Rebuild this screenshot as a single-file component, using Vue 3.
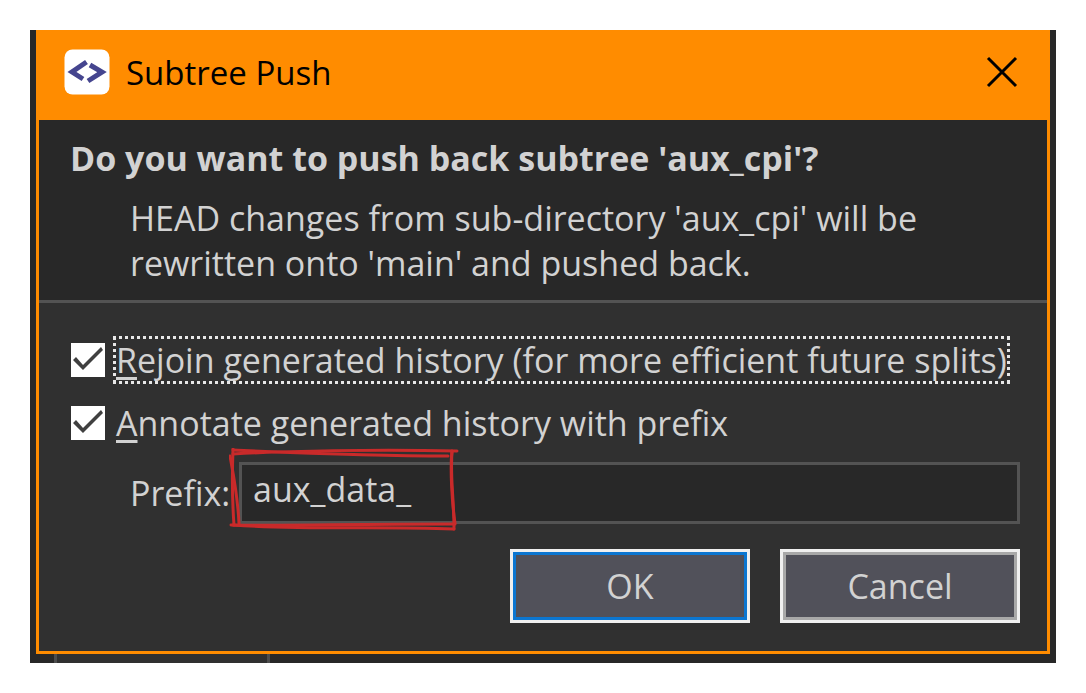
<script setup>
import { ref } from 'vue'

const rejoin = ref(true)
const annotate = ref(true)
const prefix = ref('aux_data_')
</script>

<template>
  <main class="page">
    <div class="backdrop">
      <section class="dialog" role="dialog" aria-labelledby="dialog-title">
        <header class="titlebar">
          <svg class="app-icon" viewBox="0 0 46 46" aria-hidden="true">
            <rect x="0.5" y="0.5" width="45" height="45" rx="8" fill="#fff" />
            <path d="M22.500 13 8 23l11 7M26 16l12 7-14 9" fill="none" stroke="#45458f" stroke-width="5" />
          </svg>
          <h1 id="dialog-title" class="title">Subtree Push</h1>
          <button class="close" type="button" aria-label="Close">
            <svg viewBox="0 0 32 32" aria-hidden="true">
              <path d="M2 2l28 28M30 2 2 30" fill="none" stroke="#000" stroke-width="3" />
            </svg>
          </button>
        </header>

        <div class="intro">
          <h2 class="question">Do you want to push back subtree 'aux_cpi'?</h2>
          <p class="detail">
            HEAD changes from sub-directory 'aux_cpi' will be<br />
            rewritten onto 'main' and pushed back.
          </p>
        </div>

        <form class="body" @submit.prevent>
          <div class="option">
            <input id="rejoin" v-model="rejoin" type="checkbox" class="check" />
            <label for="rejoin" class="caption focused"><u>R</u>ejoin generated history (for more efficient future splits)</label>
          </div>
          <div class="option">
            <input id="annotate" v-model="annotate" type="checkbox" class="check" />
            <label for="annotate" class="caption"><u>A</u>nnotate generated history with prefix</label>
          </div>
          <div class="field">
            <label for="prefix" class="field-label">Prefix:</label>
            <div class="field-box">
              <input id="prefix" v-model="prefix" type="text" class="text-input" spellcheck="false" />
              <svg class="marker" viewBox="0 0 230 84" aria-hidden="true">
                <g fill="none" stroke="#c92a2a" stroke-width="3" stroke-linecap="round">
                  <path d="M4 6C54 3 148 1 228 3" />
                  <path d="M4 2C50 4 134 8 219 8" />
                  <path d="M223 3C221 20 223 55 226 75" />
                  <path d="M223 4C221 30 225 50 225 81" />
                  <path d="M2 77C60 78 114 76 226 76" />
                  <path d="M4 77C78 82 148 78 225 81" />
                  <path d="M4 1C3 27 3 50 5 77" />
                  <path d="M1 8C5 30 9 50 10 76" />
                </g>
              </svg>
            </div>
          </div>
          <div class="actions">
            <button class="btn primary" type="submit">OK</button>
            <button class="btn" type="button">Cancel</button>
          </div>
        </form>
      </section>
      <div class="behind"><div class="behind-tab"></div></div>
    </div>
  </main>
</template>

<style>
body {
  background: #fff;
}
</style>

<style scoped>
* {
  box-sizing: border-box;
}
.page {
  padding: 30px;
  font-family: "Open Sans", "Noto Sans", sans-serif;
  font-size: 34px;
  line-height: 45px;
  color: #d2d2d2;
}
.backdrop {
  background: #282828;
  padding: 0 6px;
}
.dialog {
  border: 3px solid #ff8c00;
  border-top: 0;
  background: #303030;
}
.titlebar {
  display: flex;
  align-items: center;
  height: 90px;
  padding: 0 29px 6px 25px;
  background: #ff8c00;
  color: #000;
}
.app-icon {
  width: 46px;
  height: 46px;
  margin-right: 16px;
}
.title {
  flex: 1;
  margin: 0;
  font-size: 33px;
  font-weight: 400;
}
.close {
  width: 32px;
  height: 32px;
  padding: 0;
  border: 0;
  background: none;
}
.close svg {
  display: block;
}
.intro {
  padding: 16px 30px 14px 31px;
  background: #282828;
  border-bottom: 3px solid #535353;
}
.question {
  margin: 0;
  font-size: 34px;
  font-weight: 700;
  line-height: 45px;
  white-space: nowrap;
}
.detail {
  margin: 0;
  padding: 15px 0 0 60px;
  white-space: nowrap;
}
.body {
  padding: 33px 27px 28px 32px;
}
.option {
  display: flex;
  align-items: center;
  gap: 8px;
  margin-bottom: 15px;
}
.check {
  appearance: none;
  flex: none;
  width: 34px;
  height: 34px;
  margin: 0;
  background: #fff;
}
.check:checked::before {
  content: "";
  display: block;
  width: 34px;
  height: 34px;
  background: #404040;
  clip-path: polygon(2px 17px, 5px 14px, 12px 22px, 30px 4px, 32px 7px, 12px 27px);
}
.caption {
  border: 3px solid transparent;
  line-height: 42px;
  white-space: nowrap;
}
.caption u {
  text-decoration-thickness: 3px;
  text-underline-offset: 4px;
}
.focused {
  border: 3px dotted #e8e8e8;
}
.field {
  display: flex;
  align-items: center;
  padding-left: 59px;
}
.field-label {
  flex: none;
  width: 109px;
  white-space: nowrap;
}
.field-box {
  position: relative;
  flex: 1;
}
.text-input {
  display: block;
  width: 100%;
  height: 62px;
  padding: 0 11px 8px;
  border: 3px solid #535353;
  border-radius: 0;
  background: #282828;
  color: inherit;
  font: inherit;
  outline: 0;
}
.marker {
  position: absolute;
  left: -10px;
  top: -14px;
  width: 230px;
  height: 84px;
  pointer-events: none;
}
.actions {
  display: flex;
  justify-content: flex-end;
  gap: 30px;
  margin-top: 25px;
}
.btn {
  width: 240px;
  height: 74px;
  padding: 0;
  border: 3px solid #f0f0f0;
  box-shadow: inset 0 0 0 3px #a8a8a8;
  background: #51515a;
  color: #d2d2d2;
  font: inherit;
}
.primary {
  box-shadow: inset 0 0 0 3px #0b76d1;
}
.behind {
  height: 9px;
  padding-left: 18px;
}
.behind-tab {
  width: 216px;
  height: 9px;
  border: 3px solid #4c4c4c;
  border-width: 0 3px;
  background: #303030;
}
</style>
